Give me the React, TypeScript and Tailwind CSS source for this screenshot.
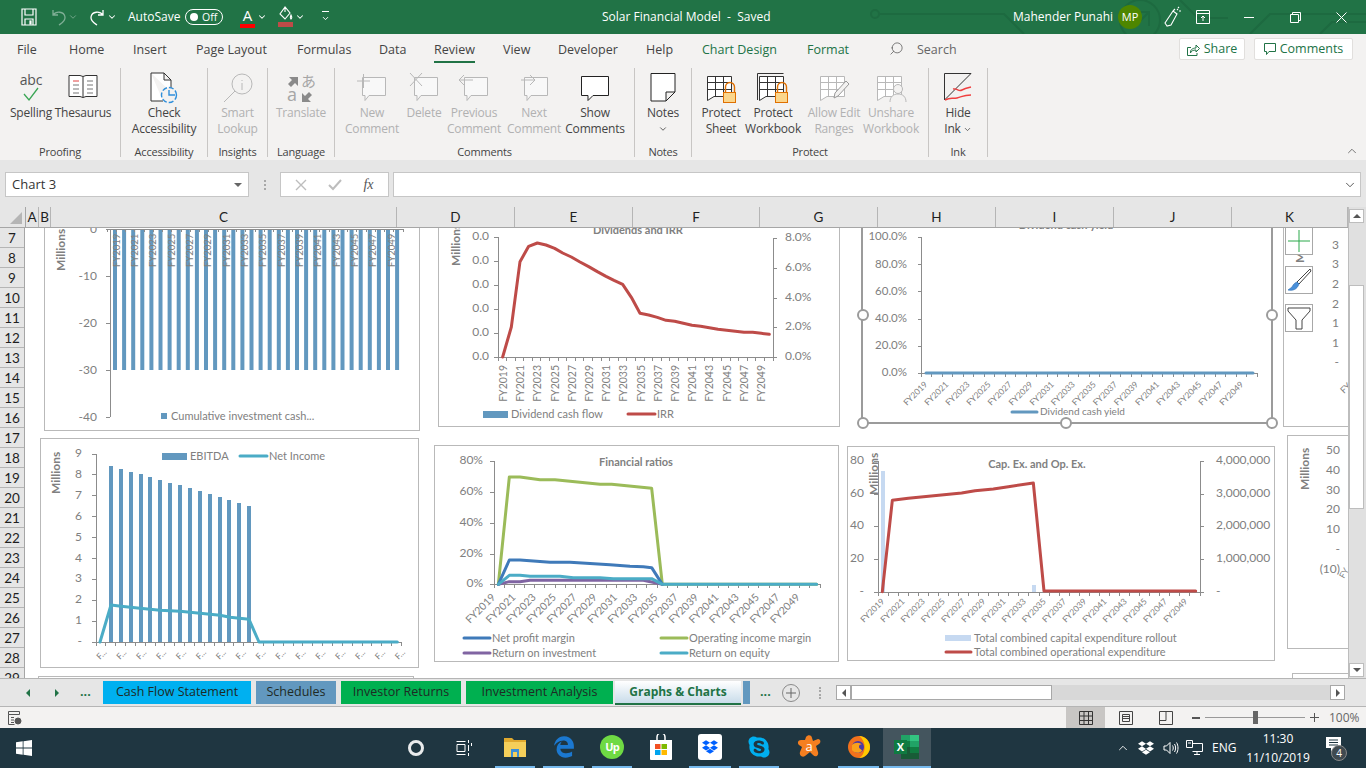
import type { ReactNode } from "react";
import { ChevronDown, ChevronUp, Search } from "lucide-react";
import { FaDropbox, FaSkype, FaEdgeLegacy } from "react-icons/fa";

const UI = "font-['Open_Sans','Noto_Sans',sans-serif]";
const GRAY = "#808080";
const RED = "#be4b48";
const BLUE = "#6298bf";
const TEAL = "#4bacc6";
const CHART_FONT = "Lato, sans-serif";

type Pt = [number, number];

// points were read off 3x crops, so convert them back to page pixels
const pts = (x0: number, y0: number, list: Pt[]) =>
  list.map(([a, b]) => `${x0 + a / 3},${y0 + b / 3}`).join(" ");

const range = (n: number) => Array.from({ length: n }, (_, i) => i);
const years = range(16).map((i) => `FY${2019 + i * 2}`);

function T(props: { x: number; y: number; s?: number; a?: "start" | "middle" | "end"; r?: number; b?: boolean; c?: string; children: ReactNode }) {
  const { x, y, s = 12, a = "start", r, b, c = GRAY, children } = props;
  return (
    <text
      x={r === undefined ? x : 0}
      y={r === undefined ? y : 0}
      transform={r === undefined ? undefined : `translate(${x} ${y}) rotate(${r})`}
      fontSize={s}
      fontFamily={CHART_FONT}
      fontWeight={b ? 700 : 400}
      textAnchor={a}
      fill={c}
    >
      {children}
    </text>
  );
}

function YAxis({ x, ys, dir = -1 }: { x: number; ys: number[]; dir?: number }) {
  return (
    <g stroke="#8c8c8c" strokeWidth="1" shapeRendering="crispEdges">
      <line x1={x} x2={x} y1={ys[0]} y2={ys[ys.length - 1]} />
      {ys.map((y) => (
        <line key={y} x1={x} x2={x + dir * 4} y1={y} y2={y} />
      ))}
    </g>
  );
}

function XAxis({ x1, x2, y, n, up }: { x1: number; x2: number; y: number; n: number; up?: boolean }) {
  return (
    <g stroke="#8c8c8c" strokeWidth="1" shapeRendering="crispEdges">
      <line x1={x1} x2={x2} y1={y} y2={y} />
      {range(n + 1).map((i) => {
        const x = x1 + ((x2 - x1) * i) / n;
        return <line key={i} x1={x} x2={x} y1={y} y2={up ? y + 3 : y + 4} />;
      })}
    </g>
  );
}

function Line({ p, c, w = 3 }: { p: string; c: string; w?: number }) {
  return <polyline points={p} fill="none" stroke={c} strokeWidth={w} strokeLinejoin="round" strokeLinecap="round" />;
}

function Chart({ pos, box, border = 1, children }: { pos: string; box: [number, number, number, number]; border?: number; children: ReactNode }) {
  const [x, y, w, h] = box;
  return (
    <div className={`absolute box-border bg-white ${border === 2 ? "border-2 border-[#9b9b9b]" : "border border-[#b9b9b9]"} ${pos}`}>
      <svg className="block w-full h-full" viewBox={`${x + border} ${y + border} ${w - border * 2} ${h - border * 2}`}>
        {children}
      </svg>
    </div>
  );
}

function CashChart() {
  const ys = [228, 275, 322, 369, 416];
  return (
    <Chart pos="left-[19px] top-[-30px] w-[376px] h-[233px]" box={[44, 197, 376, 233]}>
      <T x={65} y={270} b s={12} r={-90}>Millions</T>
      {range(32).map((i) => (
        <rect key={i} x={113 + i * 9.1} y={228} width="4" height="141" fill={BLUE} />
      ))}
      <YAxis x={110} ys={ys} />
      <XAxis x1={107} x2={403} y={228} n={32} up />
      {["0", "-10", "-20", "-30", "-40"].map((l, i) => (
        <T key={l} x={97} y={ys[i] + 4} a="end" s={12}>{l}</T>
      ))}
      {years.map((l, i) => (
        <T key={l} x={119.5 + i * 18.35} y={266} s={9.5} r={-90}>{l}</T>
      ))}
      <rect x="161" y="412" width="6" height="6" fill={BLUE} />
      <T x={171} y={419} s={11}>Cumulative investment cash...</T>
    </Chart>
  );
}

function DividendChart() {
  const ys = [236, 260, 284, 308, 332, 356];
  const rs = [237, 267, 297, 326, 356];
  const irr: Pt[] = [[218, 468], [244, 378], [270, 182], [296, 136], [322, 126], [348, 132], [374, 142], [398, 156], [424, 168], [450, 183], [476, 197], [502, 212], [528, 226], [552, 238], [578, 250], [604, 289], [630, 337], [656, 342], [682, 349], [708, 358], [734, 361], [760, 367], [786, 373], [812, 376], [838, 380], [864, 385], [890, 388], [916, 391], [942, 394], [968, 394], [994, 397], [1018, 400]];
  return (
    <Chart pos="left-[413px] top-[-30px] w-[402px] h-[229px]" box={[438, 197, 402, 229]}>
      <T x={638} y={233} a="middle" b s={11}>Dividends and IRR</T>
      <T x={460} y={265} b s={12} r={-90}>Millions</T>
      <YAxis x={498} ys={ys} />
      <YAxis x={773} ys={rs} dir={1} />
      <XAxis x1={498} x2={773} y={356} n={32} />
      {ys.map((y) => (
        <T key={y} x={489} y={y + 3} a="end" s={12}>0.0</T>
      ))}
      {["8.0%", "6.0%", "4.0%", "2.0%", "0.0%"].map((l, i) => (
        <T key={l} x={785} y={rs[i] + 3} s={12}>{l}</T>
      ))}
      <Line p={pts(430, 200, irr)} c={RED} />
      {years.map((l, i) => (
        <T key={l} x={507 + i * 17.2} y={364} a="end" s={10.5} r={-90}>{l}</T>
      ))}
      <rect x="483" y="410" width="25" height="7" fill={BLUE} />
      <T x={511} y={417} s={11}>Dividend cash flow</T>
      <Line p="628,413 655,413" c={RED} />
      <T x={657} y={417} s={11}>IRR</T>
    </Chart>
  );
}

function YieldChart() {
  const ys = [236, 263.5, 290.5, 318, 345, 372];
  return (
    <Chart pos="left-[836px] top-[-37px] w-[412px] h-[233px]" box={[861, 190, 412, 233]} border={2}>
      <T x={1066} y={228} a="middle" b s={11}>Dividend cash yield</T>
      <YAxis x={921.5} ys={ys} />
      <XAxis x1={921.5} x2={1257} y={372} n={32} />
      {["100.0%", "80.0%", "60.0%", "40.0%", "20.0%", "0.0%"].map((l, i) => (
        <T key={l} x={907} y={ys[i] + 3} a="end" s={11.5}>{l}</T>
      ))}
      <Line p="926,372 1253,372" c={BLUE} />
      {years.map((l, i) => (
        <T key={l} x={928 + i * 21.07} y={384} a="end" s={8.5} r={-45}>{l}</T>
      ))}
      <Line p="1012,411 1037,411" c={BLUE} />
      <T x={1040} y={414} s={10}>Dividend cash yield</T>
    </Chart>
  );
}

function SideChartTop() {
  const ys = [245, 264, 284, 304, 323, 343];
  return (
    <Chart pos="left-[1258px] top-[-37px] w-[90px] h-[236px]" box={[1283, 190, 90, 236]}>
      {ys.map((y, i) => (
        <T key={y} x={1339} y={y + 3} a="end" s={12}>{["3", "3", "2", "2", "1", "1"][i]}</T>
      ))}
      <T x={1339} y={365} a="end" s={12}>-</T>
      <T x={1304} y={262} b s={12} r={-90}>M</T>
      <T x={1344} y={393} s={9} r={-45}>FY</T>
    </Chart>
  );
}

function EbitdaChart() {
  const ys = range(10).map((i) => 453 + i * 20.9);
  const bars: Pt[] = [[327, 105], [357, 114], [387, 123], [417, 129], [444, 138], [474, 147], [504, 156], [534, 162], [564, 171], [594, 180], [624, 189], [654, 198], [681, 207], [711, 216], [741, 225]];
  const net: Pt[] = [[300, 633], [333, 522], [363, 526], [420, 532], [480, 538], [540, 541], [600, 547], [660, 553], [690, 559], [747, 565], [777, 633], [1192, 633]];
  return (
    <Chart pos="left-[15px] top-[210px] w-[379px] h-[230px]" box={[40, 437, 379, 230]}>
      <T x={60} y={493} b s={12} r={-90}>Millions</T>
      {bars.map(([x, y]) => (
        <rect key={x} x={x / 3} y={430 + y / 3} width="4" height={641 - (430 + y / 3)} fill={BLUE} />
      ))}
      <YAxis x={96} ys={ys} />
      <XAxis x1={96} x2={401.5} y={641} n={31} />
      {["9", "8", "7", "6", "5", "4", "3", "2", "1", "-"].map((l, i) => (
        <T key={i} x={82} y={ys[i] + 3} a="end" s={12}>{l}</T>
      ))}
      <Line p={pts(0, 430, net)} c={TEAL} />
      {range(16).map((i) => (
        <T key={i} x={100 + i * 19.9} y={659} s={8.5} r={-45}>F...</T>
      ))}
      <rect x="162" y="452" width="25" height="7" fill={BLUE} />
      <T x={190} y={459} s={11}>EBITDA</T>
      <Line p="240,455 267,455" c={TEAL} />
      <T x={269} y={459} s={11}>Net Income</T>
    </Chart>
  );
}

function RatiosChart() {
  const ys = [460, 491, 522, 553, 583];
  const green: Pt[] = [[205, 430], [238, 108], [270, 108], [330, 116], [375, 116], [510, 130], [545, 130], [665, 142], [697, 430], [1160, 430]];
  const blue: Pt[] = [[205, 430], [238, 357], [270, 357], [360, 364], [420, 364], [540, 371], [600, 376], [640, 377], [665, 380], [697, 430]];
  const purple: Pt[] = [[205, 430], [238, 422], [270, 422], [300, 418], [560, 418], [640, 418], [697, 430]];
  const teal: Pt[] = [[205, 430], [238, 403], [270, 403], [300, 406], [390, 406], [430, 410], [510, 410], [550, 413], [665, 413], [697, 430], [1160, 430]];
  return (
    <Chart pos="left-[409px] top-[217px] w-[405px] h-[217px]" box={[434, 444, 405, 217]}>
      <T x={636} y={465} a="middle" b s={11}>Financial ratios</T>
      <YAxis x={494} ys={ys} />
      <XAxis x1={494} x2={820} y={583} n={32} />
      {["80%", "60%", "40%", "20%", "0%"].map((l, i) => (
        <T key={l} x={483} y={ys[i] + 3} a="end" s={12}>{l}</T>
      ))}
      <Line p={pts(430, 440, green)} c="#9bbb59" />
      <Line p={pts(430, 440, blue)} c="#3f7ab9" />
      <Line p={pts(430, 440, purple)} c="#8064a2" />
      <Line p={pts(430, 440, teal)} c={TEAL} />
      {years.map((l, i) => (
        <T key={l} x={496 + i * 20.3} y={597} a="end" s={10.5} r={-45}>{l}</T>
      ))}
      <Line p="464,637 490,637" c="#3f7ab9" />
      <T x={492} y={641} s={11}>Net profit margin</T>
      <Line p="661,637 687,637" c="#9bbb59" />
      <T x={689} y={641} s={11}>Operating income margin</T>
      <Line p="464,652 490,652" c="#8064a2" />
      <T x={492} y={656} s={11}>Return on investment</T>
      <Line p="661,652 687,652" c={TEAL} />
      <T x={689} y={656} s={11}>Return on equity</T>
    </Chart>
  );
}

function CapexChart() {
  const ys = [460, 493, 525, 558, 591];
  const opex: Pt[] = [[112, 452], [142, 178], [190, 172], [350, 156], [390, 149], [445, 144], [490, 137], [565, 126], [597, 450], [1052, 450]];
  return (
    <Chart pos="left-[822px] top-[218px] w-[428px] h-[215px]" box={[847, 445, 428, 215]}>
      <T x={1037} y={467} a="middle" b s={11}>Cap. Ex. and Op. Ex.</T>
      <T x={878} y={494} b s={12} r={-90}>Millions</T>
      <rect x="881" y="470" width="4" height="121" fill="#c6d9f1" />
      <rect x="1032" y="584" width="4" height="7" fill="#c6d9f1" />
      <YAxis x={878} ys={ys} />
      <YAxis x={1200} ys={ys} dir={1} />
      <XAxis x1={878} x2={1200} y={591} n={32} />
      {["80", "60", "40", "20", "-"].map((l, i) => (
        <T key={l} x={864} y={ys[i] + 3} a="end" s={12}>{l}</T>
      ))}
      {["4,000,000", "3,000,000", "2,000,000", "1,000,000"].map((l, i) => (
        <T key={l} x={1216} y={ys[i] + 3} s={12}>{l}</T>
      ))}
      <T x={1216} y={594} s={12}>-</T>
      <Line p={pts(845, 440, opex)} c={RED} />
      {years.map((l, i) => (
        <T key={l} x={885 + i * 20.2} y={601} a="end" s={8.5} r={-45}>{l}</T>
      ))}
      <rect x="945" y="634" width="26" height="6" fill="#c6d9f1" />
      <T x={974} y={641} s={11}>Total combined capital expenditure rollout</T>
      <Line p="946,651 971,651" c={RED} />
      <T x={974} y={655} s={11}>Total combined operational expenditure</T>
    </Chart>
  );
}

function SideChartBottom() {
  const labels = ["50", "40", "30", "20", "10", "-", "(10)"];
  return (
    <Chart pos="left-[1262px] top-[207px] w-[90px] h-[214px]" box={[1287, 434, 90, 214]}>
      <T x={1309} y={489} b s={12} r={-90}>Millions</T>
      {labels.map((l, i) => (
        <T key={l} x={1340} y={453 + i * 19.8} a="end" s={12}>{l}</T>
      ))}
      <T x={1344} y={578} s={8.5} r={-60}>FY</T>
    </Chart>
  );
}

function Handle({ pos }: { pos: string }) {
  return <div className={`absolute w-[12px] h-[12px] rounded-full bg-white border-2 border-[#9b9b9b] ${pos}`} />;
}

function ToolButton({ pos, children }: { pos: string; children: ReactNode }) {
  return (
    <div className={`absolute w-[28px] h-[28px] bg-white border border-[#a8a8a8] flex items-center justify-center ${pos}`}>
      {children}
    </div>
  );
}

function Canvas() {
  return (
    <div className="relative flex-1 bg-white overflow-hidden">
      <CashChart />
      <DividendChart />
      <YieldChart />
      <SideChartTop />
      <EbitdaChart />
      <RatiosChart />
      <CapexChart />
      <SideChartBottom />
      <div className="absolute left-[13px] top-[448px] w-[376px] h-[30px] border border-[#b9b9b9]" />
      <div className="absolute left-[1267px] top-[445px] w-[60px] h-[30px] border border-[#b9b9b9]" />
      <Handle pos="left-[832px] top-[81px]" />
      <Handle pos="left-[1241px] top-[81px]" />
      <Handle pos="left-[832px] top-[189px]" />
      <Handle pos="left-[1035px] top-[189px]" />
      <Handle pos="left-[1241px] top-[189px]" />
      <ToolButton pos="left-[1260px] top-[-1px]">
        <svg width="24" height="24" viewBox="0 0 24 24"><path d="M12 1v22M1 12h22" stroke="#2aa84a" strokeWidth="1" /></svg>
      </ToolButton>
      <ToolButton pos="left-[1260px] top-[38px]">
        <svg width="26" height="26" viewBox="0 0 26 26">
          <path d="M24 2 11 15l2 2L25 4z" fill="#fff" stroke="#444" strokeWidth="1" />
          <path d="M11 15c-3 1-4 3-5 5-1 1-3 2-4 3 4 1 9 0 11-6z" fill="#4a90d9" stroke="#2f6fb3" strokeWidth=".6" />
        </svg>
      </ToolButton>
      <ToolButton pos="left-[1260px] top-[76px]">
        <svg width="24" height="24" viewBox="0 0 24 24"><path d="M1 2h22v3l-8 9v9H9v-9L1 5z" fill="#fff" stroke="#444" strokeWidth="1" /></svg>
      </ToolButton>
    </div>
  );
}

function TitleBar() {
  return (
    <div className={`relative h-[34px] bg-[#217346] text-white text-[12px] flex items-center overflow-hidden ${UI}`}>
      <svg className="absolute inset-0 w-full h-full" viewBox="0 0 1366 34" fill="none" stroke="#1d6a40" strokeWidth="2">
        <circle cx="875" cy="14" r="4" />
        <path d="M879 14h125l20 20M1000 34h-110" />
        <circle cx="1140" cy="20" r="20" />
        <path d="M1135 12h14v14M1149 12l-16 16" />
        <path d="M1250 34l20-20h96M1320 34l12-12h34M1180 0l18 18h30" />
      </svg>
      <div className="relative flex items-center w-[602px] shrink-0">
        <svg className="ml-[21px]" width="16" height="18" viewBox="0 0 16 18" fill="none" stroke="#fff" strokeWidth="1.2">
          <path d="M1 1h14v16H1zM4 1v6h8V1M4 17v-6h8v6" />
          <path d="M9 13h1v3H9z" />
        </svg>
        <svg className="ml-[14px]" width="16" height="18" viewBox="0 0 16 18" fill="none" stroke="#7fae95" strokeWidth="1.3">
          <path d="M2 2v5h5M2 7c3-4 11-4 12 2 .5 4-3 6-6 8" />
        </svg>
        <ChevronDown className="ml-[1px] text-[#7fae95]" size={10} />
        <svg className="ml-[11px]" width="16" height="18" viewBox="0 0 16 18" fill="none" stroke="#fff" strokeWidth="1.3">
          <path d="M14 2v5H9M14 7C11 3 3 3 2 9c-.5 4 3 6 6 8" />
        </svg>
        <ChevronDown className="ml-[2px]" size={10} strokeWidth={2.5} />
        <span className="ml-[11px] w-[57px]">AutoSave</span>
        <div className="w-[38px] h-[16px] rounded-full border border-white flex items-center pl-[4px] gap-[4px]">
          <span className="w-[8px] h-[8px] rounded-full bg-white" />
          <span className="text-[10.5px] leading-none">Off</span>
        </div>
        <div className="ml-[17px] w-[15px] h-[22px] flex flex-col items-center">
          <span className="text-[15px] leading-[18px]">A</span>
          <span className="w-[15px] h-[4px] bg-[#ff0000]" />
        </div>
        <ChevronDown className="ml-[2px]" size={10} strokeWidth={2.5} />
        <div className="ml-[11px] w-[15px] h-[22px] flex flex-col items-center">
          <svg width="14" height="16" viewBox="0 0 14 16" fill="none" stroke="#fff" strokeWidth="1.1">
            <path d="M6 1 1 8l5 5 5-6zM6 1v5M12 9c1 2 1.500 3 0 4-1-1-1-2 0-4z" />
          </svg>
          <span className="w-[15px] h-[5px] bg-[#be4b48]" />
        </div>
        <ChevronDown className="ml-[2px]" size={10} strokeWidth={2.5} />
        <div className="ml-[16px] flex flex-col items-center gap-[2px]">
          <span className="w-[7px] h-px bg-white" />
          <ChevronDown size={9} strokeWidth={2.5} />
        </div>
      </div>
      <span className="relative w-[411px] shrink-0">Solar Financial Model&nbsp; -&nbsp; Saved</span>
      <span className="relative w-[105px] shrink-0">Mahender Punahi</span>
      <div className="relative w-[24px] h-[24px] rounded-full bg-[#4e8600] flex items-center justify-center text-[11px] shrink-0">MP</div>
      <div className="relative w-[40px] shrink-0 flex justify-end">
        <svg width="18" height="22" viewBox="0 0 18 22" fill="none" stroke="#fff" strokeWidth="1.1">
          <path d="M3 20 1 17 9 5l4 3-6 11zM9 5l2-2M14 2l1-1M15 5h2M13 4l1-1" />
        </svg>
      </div>
      <div className="relative w-[46px] ml-[-2px] shrink-0 flex justify-center">
        <svg width="14" height="14" viewBox="0 0 14 14" fill="none" stroke="#fff"><path d="M.5 .5h13v13H.5zM.5 3.500h13M7 11V6M5 8l2-2 2 2" /></svg>
      </div>
      <div className="relative w-[46px] shrink-0 flex justify-center">
        <span className="w-[10px] h-px bg-white" />
      </div>
      <div className="relative w-[46px] shrink-0 flex justify-center">
        <svg width="11" height="11" viewBox="0 0 11 11" fill="none" stroke="#fff"><path d="M.5 2.500h8v8h-8zM2.500 2.500v-2h8v8h-2" /></svg>
      </div>
      <div className="relative w-[46px] shrink-0 flex justify-center">
        <svg width="11" height="11" viewBox="0 0 11 11" stroke="#fff"><path d="M.5 .5l10 10M10.500 .5l-10 10" /></svg>
      </div>
    </div>
  );
}

const tabs = [
  { label: "File", w: "w-[52px]" },
  { label: "Home", w: "w-[64px]" },
  { label: "Insert", w: "w-[63px]" },
  { label: "Page Layout", w: "w-[101px]" },
  { label: "Formulas", w: "w-[82px]" },
  { label: "Data", w: "w-[55px]" },
  { label: "Review", w: "w-[69px]", active: true },
  { label: "View", w: "w-[55px]" },
  { label: "Developer", w: "w-[88px]" },
  { label: "Help", w: "w-[56px]" },
  { label: "Chart Design", w: "w-[105px]", green: true },
  { label: "Format", w: "w-[82px]", green: true },
];

function TabRow() {
  return (
    <div className={`h-[29px] bg-[#f3f2f1] flex pl-[17px] text-[12.5px] text-[#444] ${UI}`}>
      {tabs.map((t) => (
        <div key={t.label} className={t.w}>
          <div className="w-fit">
            <div className={`h-[27px] leading-[31px] whitespace-nowrap ${t.green ? "text-[#217346]" : ""}`}>{t.label}</div>
            {t.active && <div className="h-[2px] bg-[#217346]" />}
          </div>
        </div>
      ))}
      <div className="w-[28px] pt-[7px]">
        <Search size={15} strokeWidth={1.2} className="-scale-x-100 text-[#555]" />
      </div>
      <div className="flex-1 leading-[31px] text-[#666]">Search</div>
      <div className="flex gap-[9px] pt-[4px] pr-[13px] h-[26px]">
        <div className="w-[66px] bg-white border border-[#e1dfdd] rounded-[2px] flex items-center justify-center gap-[4px] text-[#217346]">
          <svg width="13" height="13" viewBox="0 0 13 13" fill="none" stroke="#217346"><path d="M9 5v-3l3.500 3.500L9 9V7C6 7 4 8 3.500 10c-.5-3 2-5 5.500-5zM10 10v2.500H.5v-8H4" /></svg>
          <span className="leading-[24px]">Share</span>
        </div>
        <div className="w-[99px] bg-white border border-[#e1dfdd] rounded-[2px] flex items-center justify-center gap-[4px] text-[#217346]">
          <svg width="12" height="12" viewBox="0 0 12 12" fill="none" stroke="#217346"><path d="M.5 .5h11v8H5l-2.500 3v-3h-2z" /></svg>
          <span className="leading-[24px]">Comments</span>
        </div>
      </div>
    </div>
  );
}

function Cmd({ w, lines, off, chevron, children }: { w: string; lines: string[]; off?: boolean; chevron?: boolean; children: ReactNode }) {
  return (
    <div className={`${w} shrink-0 flex flex-col items-center ${off ? "text-[#b1b1b1]" : "text-[#444]"}`}>
      <div className="h-[37px] pt-[4px] flex items-start justify-center">{children}</div>
      {lines.map((l) => (
        <div key={l} className="h-[16px] leading-[16px] whitespace-nowrap">{l}</div>
      ))}
      {chevron && <ChevronDown size={10} strokeWidth={2} className="mt-[3px]" />}
    </div>
  );
}

function Group({ w, label, pad, children }: { w: string; label: string; pad?: string; children: ReactNode }) {
  return (
    <div className={`${w} shrink-0 flex flex-col border-r border-[#c8c6c4] h-[89px] mt-[5px] box-border`}>
      <div className={`flex h-[77px] ${pad ?? "justify-center"}`}>{children}</div>
      <div className="h-[12px] text-center text-[11px] leading-[14px] text-[#444] whitespace-nowrap">{label}</div>
    </div>
  );
}

function Bubble({ c, children }: { c: string; children?: ReactNode }) {
  return (
    <svg width="30" height="30" viewBox="0 0 30 30" fill="none" stroke={c} strokeWidth="1">
      <path d="M5.500 5.500h23v18H12l-4 5v-5H5.500z" fill="#f8f8f8" />
      {children}
    </svg>
  );
}

function GridIcon({ c, children }: { c: string; children?: ReactNode }) {
  return (
    <svg width="32" height="32" viewBox="0 0 32 32" fill="none" stroke={c} strokeWidth="1">
      <path d="M2.500 4.500h24v20H9l-6.500 4z" fill="#fff" />
      <path d="M2.500 10.500h24M2.500 17.500h24M10.500 4.500v20M18.500 4.500v20" />
      {children}
    </svg>
  );
}

const Lock = () => (
  <>
    <path d="M20.500 20v-5a4.500 4.500 0 0 1 9 0v5" stroke="#e07000" strokeWidth="1.4" />
    <rect x="18.500" y="20.500" width="12" height="10" fill="#fbd68c" stroke="#e07000" />
  </>
);

function Ribbon() {
  const off = "#b8b8b8";
  return (
    <div className={`h-[97px] bg-[#f3f2f1] flex text-[12px] tracking-[-0.2px] ${UI}`}>
      <Group w="w-[121px]" label="Proofing" pad="pl-[5px]">
        <Cmd w="w-[52px]" lines={["Spelling"]}>
          <svg width="32" height="32" viewBox="0 0 32 32">
            <text x="16" y="13" textAnchor="middle" fontSize="14" fontFamily="Open Sans, sans-serif" fill="#555">abc</text>
            <path d="M9 22l5 6 9-12" fill="none" stroke="#3aa655" strokeWidth="1.3" />
          </svg>
        </Cmd>
        <Cmd w="w-[52px]" lines={["Thesaurus"]}>
          <svg width="30" height="30" viewBox="0 0 30 30" fill="none" stroke="#333">
            <path d="M1 3.500h11l3 1 3-1h11v21H18l-3 1-3-1H1zM15 4.500v21" fill="#fff" />
            <path d="M5 9h6" stroke="#e04040" />
            <path d="M5 13h6M5 17h6M5 21h6M19 9h6M19 13h6M19 17h6M19 21h6" stroke="#777" />
          </svg>
        </Cmd>
      </Group>
      <Group w="w-[87px]" label="Accessibility">
        <Cmd w="w-[87px]" lines={["Check", "Accessibility"]}>
          <svg width="32" height="32" viewBox="0 0 32 32" fill="none">
            <path d="M3 1h13l7 7v12M3 1v28h12M16 1v7h7" stroke="#333" fill="#fff" />
            <circle cx="21" cy="23" r="7.500" fill="#f3f2f1" stroke="#2f8fdb" strokeWidth="1.4" strokeDasharray="5 2" />
            <path d="M21 18v5h6" stroke="#2f8fdb" strokeWidth="1.4" />
          </svg>
        </Cmd>
      </Group>
      <Group w="w-[60px]" label="Insights">
        <Cmd w="w-[60px]" lines={["Smart", "Lookup"]} off>
          <svg width="32" height="32" viewBox="0 0 32 32" fill="none" stroke={off}>
            <circle cx="20" cy="12" r="10" />
            <path d="M13 19 2 30M20 8v1M20 11v7" />
          </svg>
        </Cmd>
      </Group>
      <Group w="w-[67px]" label="Language">
        <Cmd w="w-[67px]" lines={["Translate"]} off>
          <svg width="32" height="32" viewBox="0 0 32 32">
            <text x="16" y="15" fontSize="15" fontFamily="Noto Sans CJK JP, sans-serif" fill="#a6a6a6">あ</text>
            <text x="2" y="29" fontSize="18" fontFamily="Open Sans, sans-serif" fill="#a6a6a6">a</text>
            <path d="M13 5 4 5l3 3-4 4 3 3 4-4 3 3zM17 30l9 0-3-3 4-4-3-3-4 4-3-3z" fill="#8a8a8a" />
          </svg>
        </Cmd>
      </Group>
      <Group w="w-[300px]" label="Comments" pad="pl-[10px]">
        <Cmd w="w-[54px]" lines={["New", "Comment"]} off>
          <Bubble c={off}><path d="M0 9h13M6.500 2v14" /></Bubble>
        </Cmd>
        <Cmd w="w-[50px]" lines={["Delete"]} off>
          <Bubble c={off}><path d="M1 1l12 13M13 1 1 14" /></Bubble>
        </Cmd>
        <Cmd w="w-[50px]" lines={["Previous", "Comment"]} off>
          <Bubble c={off}><path d="M0 8h14M5 3 0 8l5 5" /></Bubble>
        </Cmd>
        <Cmd w="w-[70px]" lines={["Next", "Comment"]} off>
          <Bubble c={off}><path d="M2 8h14M11 3l5 5-5 5" /></Bubble>
        </Cmd>
        <Cmd w="w-[52px]" lines={["Show", "Comments"]}>
          <svg width="30" height="30" viewBox="0 0 30 30" fill="#fff" stroke="#222"><path d="M1.500 4.500h27v19H13l-5 5v-5H1.500z" /></svg>
        </Cmd>
      </Group>
      <Group w="w-[57px]" label="Notes">
        <Cmd w="w-[57px]" lines={["Notes"]} chevron>
          <svg width="26" height="30" viewBox="0 0 26 30" fill="#fff" stroke="#222"><path d="M1 1.500h24V20l-9 9H1zM25 20h-9v9" /></svg>
        </Cmd>
      </Group>
      <Group w="w-[237px]" label="Protect" pad="pl-[3px]">
        <Cmd w="w-[52px]" lines={["Protect", "Sheet"]}>
          <GridIcon c="#333"><Lock /></GridIcon>
        </Cmd>
        <Cmd w="w-[52px]" lines={["Protect", "Workbook"]}>
          <GridIcon c="#333">
            <path d="M.5 28V1.500h26" />
            <Lock />
          </GridIcon>
        </Cmd>
        <Cmd w="w-[70px]" lines={["Allow Edit", "Ranges"]} off>
          <GridIcon c={off}>
            <path d="M16 26l1-5 11-12 3 3-11 12z" fill="#f3f2f1" stroke="#999" />
          </GridIcon>
        </Cmd>
        <Cmd w="w-[44px]" lines={["Unshare", "Workbook"]} off>
          <GridIcon c={off}>
            <circle cx="23" cy="17" r="4.500" fill="#f3f2f1" />
            <path d="M15 30c0-5 3-8 8-8s8 3 8 8" fill="#f3f2f1" />
          </GridIcon>
        </Cmd>
      </Group>
      <Group w="w-[59px]" label="Ink">
        <div className="w-[59px] shrink-0 flex flex-col items-center text-[#444]">
          <div className="h-[37px] pt-[4px]">
            <svg width="30" height="30" viewBox="0 0 30 30" fill="none">
              <path d="M1.500 28V1.500H28" stroke="#333" />
              <path d="M1.500 28 28 1.500" stroke="#333" />
              <path d="M10 17c5-1 5 3 9 1s5-2 9-3M2 28c6-3 7-1 12-2s6-3 14-3" stroke="#f04040" strokeWidth="1.400" />
            </svg>
          </div>
          <div className="h-[16px] leading-[16px]">Hide</div>
          <div className="h-[16px] leading-[16px] flex items-center gap-[2px]">Ink <ChevronDown size={9} strokeWidth={2} /></div>
        </div>
      </Group>
      <div className="flex-1 flex items-end justify-end pr-[7px] pb-[2px]">
        <ChevronUp size={14} strokeWidth={1.2} className="text-[#444]" />
      </div>
    </div>
  );
}

function FormulaBar() {
  return (
    <div className={`h-[47px] bg-[#e6e6e6] flex pt-[12px] ${UI}`}>
      <div className="ml-[5px] w-[244px] h-[25px] bg-white border border-[#c6c6c6] flex items-center justify-between pl-[6px] pr-[6px] text-[13px] text-[#333]">
        <span>Chart 3</span>
        <span className="w-0 h-0 border-x-[4px] border-x-transparent border-t-[4px] border-t-[#666]" />
      </div>
      <div className="w-[31px] h-[25px] flex flex-col items-center justify-center gap-[2px]">
        <span className="w-[2px] h-[2px] bg-[#a8a8a8]" />
        <span className="w-[2px] h-[2px] bg-[#a8a8a8]" />
        <span className="w-[2px] h-[2px] bg-[#a8a8a8]" />
      </div>
      <div className="w-[109px] h-[25px] bg-white border border-[#c6c6c6] flex items-center justify-around px-[4px] text-[#c0c0c0]">
        <svg width="12" height="12" viewBox="0 0 12 12" stroke="#bdbdbd" strokeWidth="1.400"><path d="M1 1l10 10M11 1 1 11" /></svg>
        <svg width="14" height="12" viewBox="0 0 14 12" fill="none" stroke="#bdbdbd" strokeWidth="2"><path d="M1 6l4 4 8-9" /></svg>
        <span className="font-['Liberation_Serif',serif] italic text-[14px] text-[#555]">fx</span>
      </div>
      <div className="ml-[4px] w-[968px] h-[25px] bg-white border border-[#c6c6c6] flex items-center justify-end pr-[3px]">
        <ChevronDown size={14} strokeWidth={1.5} className="text-[#444]" />
      </div>
    </div>
  );
}

const cols = [
  { l: "A", w: "w-[13px]" },
  { l: "B", w: "w-[12px]" },
  { l: "C", w: "w-[346px]" },
  { l: "D", w: "w-[118px]" },
  { l: "E", w: "w-[118px]" },
  { l: "F", w: "w-[127px]" },
  { l: "G", w: "w-[118px]" },
  { l: "H", w: "w-[118px]" },
  { l: "I", w: "w-[118px]" },
  { l: "J", w: "w-[118px]" },
  { l: "K", w: "w-[116px]" },
];

function ColHeader() {
  return (
    <div className="h-[20px] flex bg-[#e6e6e6] border-b border-[#a6a6a6] font-['Lato',sans-serif] text-[13.5px] text-[#1f1f1f] box-content">
      <div className="w-[26px] border-r border-[#a6a6a6] flex items-end justify-end pr-[3px] pb-[3px]">
        <span className="w-0 h-0 border-l-[12px] border-l-transparent border-b-[12px] border-b-[#b5b5b5]" />
      </div>
      {cols.map((c) => (
        <div key={c.l} className={`${c.w} text-center leading-[20px] border-r border-[#b5b5b5]`}>{c.l}</div>
      ))}
    </div>
  );
}

function RowHeader() {
  return (
    <div className="w-[25px] shrink-0 bg-[#e6e6e6] border-r border-[#a6a6a6] font-['Lato',sans-serif] text-[13.5px] text-[#1f1f1f] overflow-hidden">
      {range(23).map((i) => (
        <div key={i} className="h-[20px] box-border border-b border-[#b5b5b5] text-center leading-[20px]">{i + 7}</div>
      ))}
    </div>
  );
}

function VScroll() {
  return (
    <div className="w-[18px] bg-[#e0e0e0] border-l border-[#bdbdbd] flex flex-col items-start pt-[2px]">
      <div className="w-[15px] h-[14px] bg-white border border-[#bdbdbd] flex items-center justify-center">
        <span className="w-0 h-0 border-x-[4px] border-x-transparent border-b-[4px] border-b-[#555]" />
      </div>
      <div className="mt-[62px] w-[15px] h-[224px] bg-white border border-[#bdbdbd]" />
      <div className="mt-auto mb-[1px] w-[15px] h-[14px] bg-white border border-[#bdbdbd] flex items-center justify-center">
        <span className="w-0 h-0 border-x-[4px] border-x-transparent border-t-[4px] border-t-[#555]" />
      </div>
    </div>
  );
}

const sheets = [
  { label: "Cash Flow Statement", cls: "w-[148px] bg-[#00b0f0]" },
  { label: "Schedules", cls: "w-[80px] ml-[5px] bg-[#6298bf]" },
  { label: "Investor Returns", cls: "w-[120px] ml-[5px] bg-[#00b050]" },
  { label: "Investment Analysis", cls: "w-[147px] ml-[5px] bg-[#00b050]" },
];

function SheetTabs() {
  return (
    <div className={`h-[29px] box-border bg-[#e6e6e6] border-y border-[#b5b5b5] flex items-center text-[12.5px] text-[#1f2a24] ${UI}`}>
      <div className="w-[103px] h-full flex items-center text-[#217346] border-r border-transparent">
        <span className="ml-[26px] w-0 h-0 border-y-[4px] border-y-transparent border-r-[4px] border-r-[#217346]" />
        <span className="ml-[25px] w-0 h-0 border-y-[4px] border-y-transparent border-l-[4px] border-l-[#217346]" />
        <span className="ml-[21px] font-bold leading-none">...</span>
      </div>
      {sheets.map((s) => (
        <div key={s.label} className={`${s.cls} h-[23px] flex items-center justify-center whitespace-nowrap`}>{s.label}</div>
      ))}
      <div className="ml-[2px] w-[126px] h-[24px] bg-gradient-to-b from-white to-[#c9dcea] border-b-2 border-[#217346] flex items-center justify-center font-bold text-[#217346] whitespace-nowrap text-[12px]">
        Graphs &amp; Charts
      </div>
      <div className="ml-[2px] w-[7px] h-[23px] bg-[#6298bf]" />
      <span className="ml-[10px] w-[12px] font-bold text-[#217346] leading-none">...</span>
      <div className="ml-[10px] w-[18px] h-[18px] rounded-full border border-[#8a8a8a] flex items-center justify-center text-[#666]">
        <svg width="10" height="10" viewBox="0 0 10 10" stroke="#666"><path d="M5 0v10M0 5h10" /></svg>
      </div>
      <div className="ml-[19px] w-[2px] h-[12px] border-l-2 border-dotted border-[#a8a8a8]" />
      <div className="ml-[15px] w-[15px] h-[15px] bg-white border border-[#a8a8a8] flex items-center justify-center">
        <span className="w-0 h-0 border-y-[4px] border-y-transparent border-r-[4px] border-r-[#555]" />
      </div>
      <div className="w-[479px] h-[15px] bg-[#d8d8d8] flex">
        <div className="w-[201px] bg-white border border-[#a8a8a8]" />
      </div>
      <div className="w-[15px] h-[15px] bg-white border border-[#a8a8a8] flex items-center justify-center">
        <span className="w-0 h-0 border-y-[4px] border-y-transparent border-l-[4px] border-l-[#555]" />
      </div>
    </div>
  );
}

function StatusBar() {
  return (
    <div className={`h-[21px] bg-[#f3f2f1] flex items-center text-[#666] text-[12px] ${UI}`}>
      <svg className="ml-[8px]" width="14" height="14" viewBox="0 0 14 14" fill="none" stroke="#555">
        <path d="M.5 .5h11v3H.5zM.5 3.500v10h6M3 6.500h3M3 9h3M3 11.500h3" />
        <circle cx="10" cy="10" r="3" fill="#555" />
      </svg>
      <div className="ml-[1044px] w-[39px] h-full bg-[#c8c6c4] flex items-center justify-center">
        <svg width="14" height="14" viewBox="0 0 14 14" fill="none" stroke="#333"><path d="M.5 .5h13v13H.5zM5 .5v13M9.500 .5v13M.5 5h13M.5 9.500h13" /></svg>
      </div>
      <div className="w-[41px] flex justify-center">
        <svg width="14" height="14" viewBox="0 0 14 14" fill="none" stroke="#444"><path d="M.5 .5h13v13H.5zM3.500 3.500h7v7h-7zM3.500 5.500h7M3.500 7.500h7" /></svg>
      </div>
      <div className="w-[39px] flex justify-center">
        <svg width="14" height="14" viewBox="0 0 14 14" fill="none" stroke="#444"><path d="M.5 .5h13v13H.5zM.5 9.500h6.500V.5" /></svg>
      </div>
      <span className="ml-[7px] w-[8px] h-[2px] bg-[#555]" />
      <div className="ml-[5px] w-[100px] h-[1px] bg-[#999] flex justify-center items-center">
        <span className="w-[5px] h-[13px] bg-[#666]" />
      </div>
      <svg className="ml-[5px]" width="9" height="9" viewBox="0 0 9 9" stroke="#555"><path d="M4.500 0v9M0 4.500h9" /></svg>
      <span className="ml-[10px]">100%</span>
    </div>
  );
}

function TaskIcon({ w = "w-[48px]", line, active, children }: { w?: string; line?: boolean; active?: boolean; children: ReactNode }) {
  return (
    <div className={`${w} h-full flex flex-col items-center ${active ? "bg-[#44555e]" : ""}`}>
      <div className="flex-1 flex items-center justify-center">{children}</div>
      <div className={`h-[2px] w-full ${line && !active ? "px-[4px]" : ""}`}>
        {line && <div className="h-full bg-[#76b9ed]" />}
      </div>
    </div>
  );
}

function Taskbar() {
  return (
    <div className={`h-[40px] bg-[#1f3641] flex items-center text-white ${UI}`}>
      <svg className="ml-[16px]" width="16" height="16" viewBox="0 0 16 16" fill="#fff">
        <path d="M0 2.300 6.700 1.300v6.200H0zM7.500 1.200 16 0v7.500H7.500zM0 8.500h6.700v6.200L0 13.700zM7.500 8.500H16V16l-8.500-1.200z" />
      </svg>
      <div className="ml-[376px] w-[16px] h-[16px] rounded-full border-[3px] border-white opacity-90" />
      <svg className="ml-[32px]" width="16" height="16" viewBox="0 0 16 16" fill="none" stroke="#fff">
        <path d="M.5 1.500h9M.5 14.500h9M1 4.500h8v7H1zM12.500 0v3M12.500 5v6M12.500 13v3M15.500 3v3" />
      </svg>
      <div className="ml-[19px] flex h-full">
        <TaskIcon w="w-[48px]" line>
          <svg width="22" height="22" viewBox="0 0 22 22">
            <path d="M0 2h8l2 2h12v4H0z" fill="#e0a92e" />
            <path d="M0 6h22v15H0z" fill="#f5cf5a" />
            <path d="M7 13h8v8H7z" fill="#3b8fd8" />
            <path d="M9 16h4v5H9z" fill="#f5cf5a" />
          </svg>
        </TaskIcon>
        <TaskIcon w="w-[49px]" line>
          <FaEdgeLegacy size={22} color="#1b78d0" />
        </TaskIcon>
        <TaskIcon w="w-[48px]" line>
          <div className="w-[24px] h-[24px] rounded-full bg-[#6fda44] text-white font-bold text-[11px] tracking-[-1px] flex items-center justify-center">Up</div>
        </TaskIcon>
        <TaskIcon w="w-[49px]">
          <svg width="24" height="26" viewBox="0 0 24 26">
            <path d="M8 6V3a4 4 0 0 1 8 0v3" fill="none" stroke="#fff" strokeWidth="1.500" />
            <path d="M1 6h22v19a1 1 0 0 1-1 1H2a1 1 0 0 1-1-1z" fill="#fff" />
            <path d="M6 10h5.500v5H6z" fill="#f25022" />
            <path d="M12.500 10H18v5h-5.500z" fill="#7fba00" />
            <path d="M6 16h5.500v5H6z" fill="#00a4ef" />
            <path d="M12.500 16H18v5h-5.500z" fill="#ffb900" />
          </svg>
        </TaskIcon>
        <TaskIcon w="w-[50px]" line>
          <div className="w-[24px] h-[26px] rounded-[3px] bg-white flex items-center justify-center">
            <FaDropbox size={16} color="#0061ff" />
          </div>
        </TaskIcon>
        <TaskIcon w="w-[48px]" line>
          <FaSkype size={24} color="#00aff0" />
        </TaskIcon>
        <TaskIcon w="w-[51px]">
          <svg width="24" height="26" viewBox="0 0 24 26">
            <path d="M9 3c2-3 6-2 6 1l1 3 5-2c3 0 3 4 1 5l-3 2 2 6c1 3-2 6-5 3l-3-3-5 4c-3 2-6-1-5-4l2-5-3-2c-2-2-1-5 2-5h4z" fill="#f57f20" />
            <text x="12" y="17" textAnchor="middle" fontSize="13" fontFamily="Open Sans, sans-serif" fill="#fff">a</text>
          </svg>
        </TaskIcon>
        <TaskIcon w="w-[49px]" line>
          <svg width="24" height="24" viewBox="0 0 24 24">
            <circle cx="12" cy="12" r="11" fill="#f2711c" />
            <path d="M12 1c6 0 11 5 11 11 0 6-5 11-11 11C19 20 20 6 12 1z" fill="#ffcb00" />
            <circle cx="11" cy="12" r="6" fill="#4a3aa7" />
            <path d="M5 10c3-3 8-3 10 0-2-1-3 0-3 2s3 2 3 4c-3 3-8 2-10-1z" fill="#f9a11b" />
          </svg>
        </TaskIcon>
        <TaskIcon active line>
          <svg width="26" height="24" viewBox="0 0 26 24">
            <path d="M7 0h9v6H7z" fill="#21a366" />
            <path d="M16 0h9v6h-9z" fill="#33c481" />
            <path d="M7 6h9v6H7z" fill="#107c41" />
            <path d="M16 6h9v6h-9z" fill="#21a366" />
            <path d="M7 12h9v6H7z" fill="#185c37" />
            <path d="M16 12h9v6h-9z" fill="#107c41" />
            <path d="M7 18h18v6H7z" fill="#185c37" />
            <rect x="0" y="5" width="13" height="14" fill="#0f7b41" />
            <text x="6.500" y="16" fontSize="11" fontWeight="700" textAnchor="middle" fontFamily="Open Sans, sans-serif" fill="#fff">X</text>
          </svg>
        </TaskIcon>
      </div>
      <ChevronUp className="ml-[185px]" size={14} strokeWidth={1.5} />
      <FaDropbox className="ml-[8px]" size={16} />
      <svg className="ml-[9px]" width="16" height="16" viewBox="0 0 16 16" fill="none" stroke="#fff">
        <path d="M1 6h2.500L7 2.500v11L3.500 10H1zM9.500 5.500c1 1.500 1 3.500 0 5M11.500 4c1.500 2.500 1.500 5.500 0 8M13.500 2.500c2 3 2 8 0 11" />
      </svg>
      <svg className="ml-[7px]" width="17" height="16" viewBox="0 0 17 16" fill="none" stroke="#fff">
        <path d="M.5 .5h6v7h-6zM2 3h3M6.500 3.500h10v8h-10M11 11.500v3M8 14.500h6" />
      </svg>
      <span className="ml-[9px] w-[33px] text-[12px]">ENG</span>
      <div className="w-[66px] text-center text-[12px] leading-[19px]">
        <div>11:30</div>
        <div>11/10/2019</div>
      </div>
      <div className="relative ml-[14px] w-[20px] h-[24px]">
        <svg width="17" height="17" viewBox="0 0 17 17" fill="#fff"><path d="M1 1h15v11h-7l-3 4v-4H1z" /><path d="M4 4h9M4 6.500h9M4 9h9" stroke="#1f3641" /></svg>
        <div className="absolute left-[6px] top-[9px] w-[16px] h-[16px] rounded-full bg-[#3f4a50] border border-[#888] flex items-center justify-center text-[10px] leading-none">4</div>
      </div>
    </div>
  );
}

export default function App() {
  return (
    <div className="w-[1366px] h-[768px] flex flex-col overflow-hidden bg-white">
      <TitleBar />
      <TabRow />
      <Ribbon />
      <FormulaBar />
      <div className="flex h-[471px]">
        <div className="w-[1348px] flex flex-col">
          <ColHeader />
          <div className="flex h-[450px]">
            <RowHeader />
            <Canvas />
          </div>
        </div>
        <VScroll />
      </div>
      <SheetTabs />
      <StatusBar />
      <Taskbar />
    </div>
  );
}
